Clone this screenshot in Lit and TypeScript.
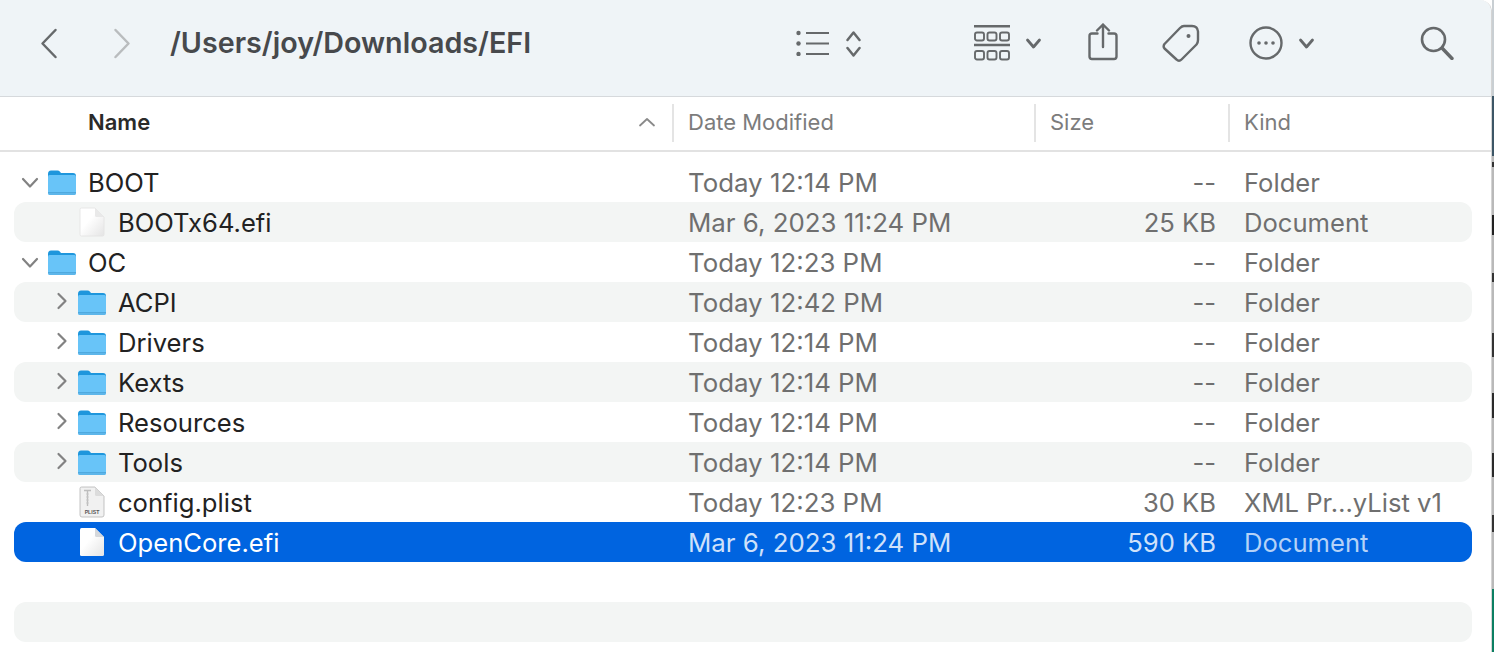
import { LitElement, html, css, svg } from "lit";
import { customElement } from "lit/decorators.js";

type Row = { n: string; d: string; s: string; k: string; icon: "folder" | "doc" | "plist"; depth: number; arrow?: "down" | "right"; sel?: boolean };

const rows: Row[] = [
  { n: "BOOT", d: "Today 12:14 PM", s: "--", k: "Folder", icon: "folder", depth: 0, arrow: "down" },
  { n: "BOOTx64.efi", d: "Mar 6, 2023 11:24 PM", s: "25 KB", k: "Document", icon: "doc", depth: 1 },
  { n: "OC", d: "Today 12:23 PM", s: "--", k: "Folder", icon: "folder", depth: 0, arrow: "down" },
  { n: "ACPI", d: "Today 12:42 PM", s: "--", k: "Folder", icon: "folder", depth: 1, arrow: "right" },
  { n: "Drivers", d: "Today 12:14 PM", s: "--", k: "Folder", icon: "folder", depth: 1, arrow: "right" },
  { n: "Kexts", d: "Today 12:14 PM", s: "--", k: "Folder", icon: "folder", depth: 1, arrow: "right" },
  { n: "Resources", d: "Today 12:14 PM", s: "--", k: "Folder", icon: "folder", depth: 1, arrow: "right" },
  { n: "Tools", d: "Today 12:14 PM", s: "--", k: "Folder", icon: "folder", depth: 1, arrow: "right" },
  { n: "config.plist", d: "Today 12:23 PM", s: "30 KB", k: "XML Pr…yList v1", icon: "plist", depth: 1 },
  { n: "OpenCore.efi", d: "Mar 6, 2023 11:24 PM", s: "590 KB", k: "Document", icon: "doc", depth: 1, sel: true },
];

const S = "#66696b";

const folder = html`<svg width="30" height="28" viewBox="0 0 30 28">
  <path d="M1 6 Q1 2.500 4 2.500 H10.500 Q12 2.500 13 3.800 L14 5 H26 Q29 5 29 8 V12 H1 Z" fill="#1e96dc"/>
  <path d="M1 8.500 Q1 7 2.500 7 H27.500 Q29 7 29 8.500 V25 Q29 27 27 27 H3 Q1 27 1 25 Z" fill="#68c4f8"/>
  <rect x="1" y="24" width="28" height="1" fill="#4fa9de"/>
  <path d="M1 25 H29 Q29 27 27 27 H3 Q1 27 1 25 Z" fill="#5db6ea"/>
</svg>`;

const doc = (sel: boolean) => html`<svg width="26" height="30" viewBox="0 0 26 30">
  <defs><linearGradient id="dg" x1="0" y1="0" x2="1" y2="1"><stop offset="0.4" stop-color="#ffffff"/><stop offset="1" stop-color="#e4e4e4"/></linearGradient></defs>
  <path d="M1 2.500 Q1 1 2.500 1 H16 L25 10 V27.500 Q25 29 23.500 29 H2.500 Q1 29 1 27.500 Z" fill="url(#dg)" stroke="${sel ? "none" : "#e2e2e2"}" stroke-width="0.8"/>
  <path d="M16 1 V8.500 Q16 10 17.500 10 H25 Z" fill="${sel ? "#d5d8dc" : "#e9e9e9"}"/>
</svg>`;

const plist = html`<svg width="26" height="32" viewBox="0 0 26 32">
  <path d="M1 2.500 Q1 1 2.500 1 H16 L25 10 V29 Q25 31 23 31 H3 Q1 31 1 29 Z" fill="#f1f1f1" stroke="#b5b5b5" stroke-width="0.8"/>
  <path d="M16 1 V8.500 Q16 10 17.500 10 H25 Z" fill="#dcdcdc"/>
  <path d="M5 4.500 H12 M8.500 4.500 V20" stroke="#bdbdbd" stroke-width="1.400" fill="none"/>
  <path d="M7 8 H10 M7 11 H10 M7 14 H10 M7 17 H10" stroke="#c8c8c8" stroke-width="0.800"/>
  <text x="13" y="27.500" text-anchor="middle" font-size="5.200" font-weight="700" font-family="Liberation Sans, sans-serif" fill="#555">PLIST</text>
</svg>`;

const arrowDown = html`<svg width="18" height="12" viewBox="0 0 18 12"><path d="M2 2 L9 9.500 L16 2" fill="none" stroke="#828282" stroke-width="2.200" stroke-linecap="round" stroke-linejoin="round"/></svg>`;
const arrowRight = html`<svg width="12" height="18" viewBox="0 0 12 18"><path d="M2.500 2 L9.500 9 L2.500 16" fill="none" stroke="#828282" stroke-width="2.200" stroke-linecap="round" stroke-linejoin="round"/></svg>`;

const ic = (w: number, h: number, body: unknown, cls = "") =>
  html`<svg class=${cls} width=${w} height=${h} viewBox="0 0 ${w} ${h}" fill="none" stroke=${S} stroke-width="2" stroke-linecap="round" stroke-linejoin="round">${body}</svg>`;

@customElement("app-root")
export class AppRoot extends LitElement {
  static styles = css`
    :host { display: block; width: 1494px; height: 652px; overflow: hidden; background: #fff; font-family: Inter, "Liberation Sans", sans-serif; }
    .page { display: flex; width: 1494px; height: 652px; }
    .strip { width: 2px; flex: none; background: linear-gradient(to bottom,
      #c9cfd3 0, #c9cfd3 96px, #3c5666 96px, #3c5666 156px,
      #b9b9b9 156px, #b9b9b9 162px, #333 162px, #333 167px,
      #b9b9b9 167px, #b9b9b9 215px, #222 215px, #222 235px,
      #b9b9b9 235px, #b9b9b9 273px, #333 273px, #333 282px,
      #b9b9b9 282px, #b9b9b9 333px, #333 333px, #333 357px,
      #b9b9b9 357px, #b9b9b9 393px, #2a2a2a 393px, #2a2a2a 418px,
      #b9b9b9 418px, #b9b9b9 453px, #2a2a2a 453px, #2a2a2a 477px,
      #b9b9b9 477px, #b9b9b9 515px, #333 515px, #333 532px,
      #b9b9b9 532px, #b9b9b9 589px, #0b7f62 589px, #0b7f62 100%); }
    .win { width: 1491px; flex: none; height: 652px; background: #fff; border-right: 1px solid #d4d4d4; border-top-right-radius: 12px; overflow: hidden; }
    .toolbar { background: #eff4f7; border-bottom: 1px solid #d6d9dc; display: flex; align-items: center; padding: 0 0 10px 39px; box-sizing: content-box; height: 86px; }
    .toolbar svg { flex: none; display: block; }
    .fwd { margin-left: 53px; }
    .path { flex: none; width: 626px; margin-left: 38px; font-size: 28.700px; font-weight: 600; color: #47494c; white-space: nowrap; line-height: 34px; }
    .updown { margin-left: 15px; }
    .grid { margin-left: 112px; }
    .c1 { margin-left: 15px; }
    .share { margin-left: 46px; }
    .tag { margin-left: 44px; }
    .more { margin-left: 49px; }
    .c2 { margin-left: 15px; }
    .search { margin-left: 105px; }
    .head { height: 55px; border-bottom: 2px solid #e2e2e2; display: grid; grid-template-columns: 672px 362px 194px 1fr; font-size: 22px; color: #7c7c7c; box-sizing: border-box; }
    .hc { display: flex; align-items: center; padding-left: 14px; padding-bottom: 2px; box-sizing: border-box; height: 38px; margin-top: 7px; border-left: 2px solid #e4e4e4; line-height: 1; }
    .hc.name { border-left: 0; padding-left: 88px; color: #2a2a2a; justify-content: space-between; padding-right: 16px; font-weight: 600; }
    .list { padding: 10px 8px 0 14px; box-sizing: border-box; width: 1480px; }
    .row { height: 40px; display: grid; grid-template-columns: 674px 361px 167px 1fr; align-items: center; font-size: 25.600px; color: #222; border-radius: 12px; white-space: nowrap; line-height: 1; padding-top: 2px; box-sizing: border-box; }
    .row.alt { background: #f3f5f4; }
    .row.sel { background: #0064e0; color: #fff; }
    .namecell { display: flex; align-items: center; position: relative; }
    .depth0 { padding-left: 74px; }
    .depth1 { padding-left: 104px; }
    .iconbox { position: absolute; top: -8px; height: 40px; width: 30px; display: flex; align-items: center; justify-content: center; }
    .depth0 .iconbox { left: 33px; }
    .depth1 .iconbox { left: 63px; }
    .arrow { position: absolute; height: 40px; display: flex; align-items: center; }
    .depth0 .arrow { left: 7px; top: -7px; }
    .depth1 .arrow { left: 42px; top: -9px; }
    .date { color: #6f6f6f; font-size: 25.850px; }
    .size { color: #6f6f6f; text-align: right; }
    .kind { color: #6f6f6f; padding-left: 28px; }
    .sel .date, .sel .size { color: #cfe1fa; }
    .sel .kind { color: #b5d2f7; }
    .gap { height: 40px; }
    .empty { height: 40px; background: #f3f5f4; border-radius: 12px; }
  `;

  render() {
    return html`<div class="page"><div class="win">
      <div class="toolbar">
        ${ic(20, 33, svg`<path d="M16.500 3 L3.500 16.500 L16.500 30" stroke-width="2.500"/>`)}
        ${ic(20, 33, svg`<path d="M3.500 3 L16.500 16.500 L3.500 30" stroke="#b9bcbe" stroke-width="2.500"/>`, "fwd")}
        <div class="path">/Users/joy/Downloads/EFI</div>
        ${ic(34, 26, svg`<g fill=${S} stroke="none"><circle cx="2.500" cy="3" r="2.200"/><circle cx="2.500" cy="13.500" r="2.200"/><circle cx="2.500" cy="24" r="2.200"/></g><path d="M10 3 H33 M10 13.500 H33 M10 24 H33" stroke-width="2.200" stroke-linecap="butt"/>`)}
        ${ic(17, 28, svg`<path d="M2.500 11 L8.500 3.500 L14.500 11 M2.500 19 L8.500 26.500 L14.500 19" stroke-width="2.500"/>`, "updown")}
        ${ic(36, 36, svg`<path d="M0 1.200 H36 M0 20 H36" stroke-linecap="butt" stroke-width="2.400"/>
          <g stroke-width="1.900"><rect x="1" y="7.500" width="9" height="8" rx="2"/><rect x="13.500" y="7.500" width="9" height="8" rx="2"/><rect x="26" y="7.500" width="9" height="8" rx="2"/>
          <rect x="1" y="26" width="9" height="8.500" rx="2"/><rect x="13.500" y="26" width="9" height="8.500" rx="2"/><rect x="26" y="26" width="9" height="8.500" rx="2"/></g>`, "grid")}
        ${ic(17, 14, svg`<path d="M2.500 4 L8.500 11 L14.500 4" stroke-width="2.800"/>`, "c1")}
        ${ic(30, 40, svg`<path d="M15 24 V1.500 M9 7.500 L15 1.500 L21 7.500 M9.500 10.500 H4 Q1.500 10.500 1.500 13 V33.500 Q1.500 36 4 36 H26 Q28.500 36 28.500 33.500 V13 Q28.500 10.500 26 10.500 H20.500" stroke-width="2.400"/>`, "share")}
        ${ic(38, 38, svg`<path d="M22 2 H30 Q35.500 2 36 7.500 V16 Q36 18.500 34.500 20.500 L19.500 35.500 Q17 38 14.500 35.500 L2.500 24.500 Q0.800 22.500 2.500 20 L18 4 Q20 2 22 2 Z" stroke-width="2.400"/><circle cx="26.500" cy="12" r="2" fill=${S} stroke="none"/>`, "tag")}
        ${ic(34, 34, svg`<circle cx="17" cy="17" r="15.500" stroke-width="2.400"/><g fill=${S} stroke="none"><circle cx="10" cy="17" r="1.800"/><circle cx="17" cy="17" r="1.800"/><circle cx="24" cy="17" r="1.800"/></g>`, "more")}
        ${ic(17, 14, svg`<path d="M2.500 4 L8.500 11 L14.500 4" stroke-width="2.800"/>`, "c2")}
        ${ic(34, 34, svg`<circle cx="13.500" cy="13.500" r="11.500" stroke-width="2.600"/><path d="M22 22 L32 32.500" stroke-width="3.400"/>`, "search")}
      </div>
      <div class="head">
        <div class="hc name"><span>Name</span>
          <svg width="18" height="10" viewBox="0 0 18 10" fill="none" stroke="#8a8a8a" stroke-width="1.800" stroke-linecap="round" stroke-linejoin="round"><path d="M2 8.500 L9 2 L16 8.500"/></svg>
        </div>
        <div class="hc">Date Modified</div>
        <div class="hc">Size</div>
        <div class="hc">Kind</div>
      </div>
      <div class="list">
        ${rows.map((r, i) => html`<div class="row ${i % 2 === 1 && !r.sel ? "alt" : ""} ${r.sel ? "sel" : ""}">
          <div class="namecell depth${r.depth}">
            ${r.arrow ? html`<span class="arrow">${r.arrow === "down" ? arrowDown : arrowRight}</span>` : ""}
            <span class="iconbox">${r.icon === "folder" ? folder : r.icon === "plist" ? plist : doc(!!r.sel)}</span>
            <span>${r.n}</span>
          </div>
          <div class="date">${r.d}</div>
          <div class="size">${r.s}</div>
          <div class="kind">${r.k}</div>
        </div>`)}
        <div class="gap"></div>
        <div class="empty"></div>
      </div>
    </div><div class="strip"></div></div>`;
  }
}
